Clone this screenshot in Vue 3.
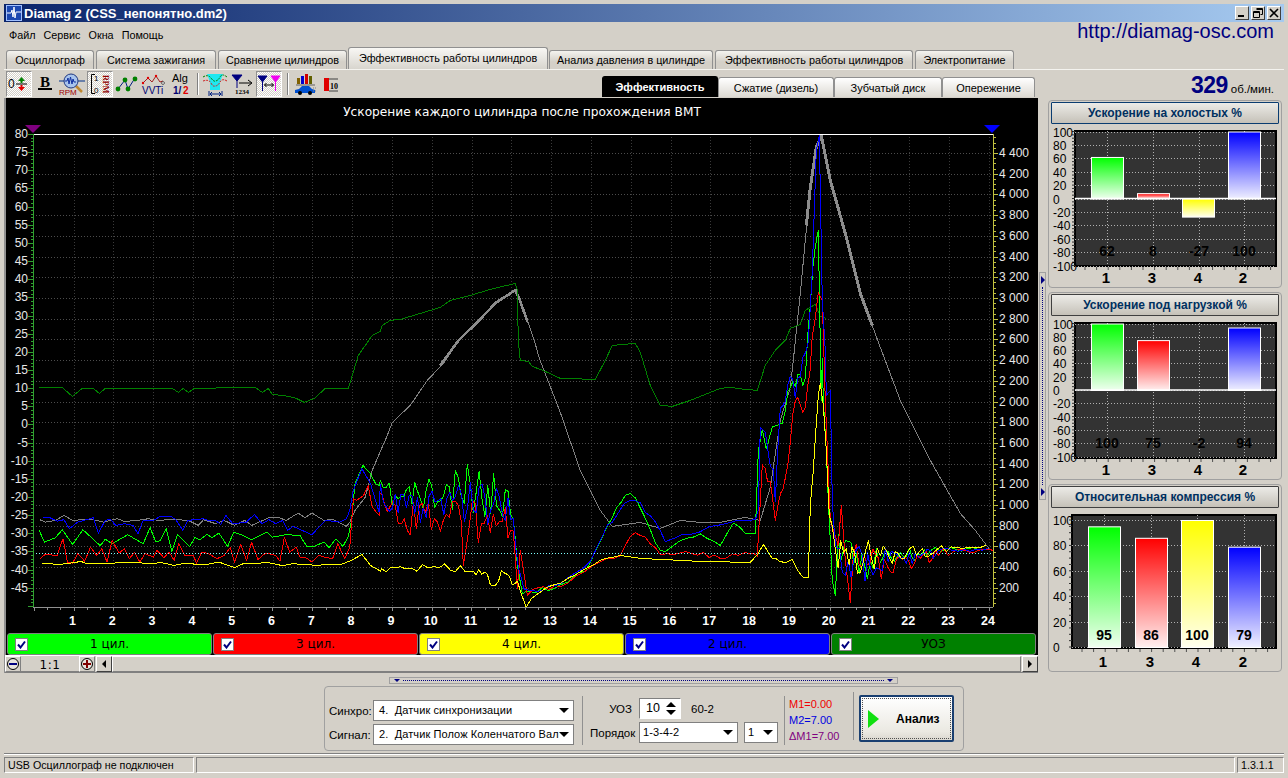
<script setup>
const tabs = [
  { t: 'Осциллограф', w: 88 },
  { t: 'Система зажигания', w: 120 },
  { t: 'Сравнение цилиндров', w: 129 },
  { t: 'Эффективность работы цилиндров', w: 200, on: true },
  { t: 'Анализ давления в цилиндре', w: 164 },
  { t: 'Эффективность работы цилиндров', w: 198 },
  { t: 'Электропитание', w: 99 }
]
const subtabs = [
  { t: 'Эффективность', w: 116, on: true },
  { t: 'Сжатие (дизель)', w: 116 },
  { t: 'Зубчатый диск', w: 108 },
  { t: 'Опережение', w: 93 }
]
const legend = [
  { t: '1 цил.', c: 'lg-green' },
  { t: '3 цил.', c: 'lg-red' },
  { t: '4 цил.', c: 'lg-yellow' },
  { t: '2 цил.', c: 'lg-blue' },
  { t: 'УОЗ', c: 'lg-dark' }
]

// main plot, page coordinates
const X0 = 33, X1 = 993, YT = 134, YB = 607
const leftY = v => 134 + (80 - v) * 3.63
const rightY = v => 153 + (4400 - v) / 200 * 20.71
const gridX = n => 73.5 + (n - 1) * 39.8

const leftLabels = []
for (let v = 80; v >= -45; v -= 5) leftLabels.push({ v, y: leftY(v) })
const leftMinor = []
for (let v = 80; v >= -50; v -= 1) leftMinor.push({ y: leftY(v), major: v % 5 === 0 })
const rightLabels = []
for (let v = 4400; v >= 200; v -= 200) {
  const s = v >= 1000 ? Math.floor(v / 1000) + ' ' + String(v % 1000).padStart(3, '0') : String(v)
  rightLabels.push({ s, y: rightY(v) })
}
const rightMinor = []
for (let v = 4600; v >= 0; v -= 50) if (rightY(v) > YT && rightY(v) < YB) rightMinor.push({ y: rightY(v), major: v % 200 === 0 })
const hours = []
for (let n = 1; n <= 24; n++) hours.push(n)
const botTicks = []
for (let x = 33.7; x < 993; x += 39.8 / 3) botTicks.push(x)

function rng(seed) {
  let s = seed
  return () => (s = (s * 16807) % 2147483647) / 2147483647
}
// points read from a 2.904 x 3 crop of the left part of the plot
const fromCrop = arr => arr.map(p => [p[0] / 2.904, 440 + p[1] / 3])
function noisy(ctrl, seed) {
  const r = rng(seed)
  const out = []
  for (let i = 0; i < ctrl.length - 1; i++) {
    const [x0, y0, a0 = 0] = ctrl[i]
    const [x1, y1, a1 = 0] = ctrl[i + 1]
    const big = Math.max(a0, a1)
    const step = big >= 8 ? 3 : big >= 3 ? 6 : 9
    const n = Math.max(1, Math.ceil((x1 - x0) / step))
    for (let j = 0; j < n; j++) {
      const t = j / n
      const a = a0 + (a1 - a0) * t
      out.push([x0 + (x1 - x0) * t, y0 + (y1 - y0) * t + (r() - 0.5) * 2 * a])
    }
  }
  return out
}
const toPts = arr => arr.map(p => p[0].toFixed(1) + ',' + p[1].toFixed(1)).join(' ')
const tail = [[845, 562, 22], [870, 560, 18], [900, 557, 12], [930, 552, 6], [950, 549, 3], [990, 548, 1]]

const green = toPts(fromCrop([[113, 270], [128, 305], [160, 292], [180, 268], [210, 312], [240, 268], [290, 316], [305, 296], [325, 310], [370, 283], [415, 310], [435, 262], [452, 305], [465, 300], [482, 265], [498, 332], [515, 283], [550, 318], [565, 292], [580, 298], [600, 282], [615, 292], [635, 278], [660, 318], [678, 275], [700, 283], [730, 298], [775, 275], [790, 290], [830, 283], [870, 285], [890, 318], [910, 318], [940, 305], [955, 322], [975, 295], [995, 318], [1010, 290], [1020, 240], [1030, 130], [1053, 75], [1075, 100], [1090, 130], [1100, 135]]).concat(noisy([[380, 485, 5], [395, 498, 15], [420, 495, 20], [440, 498, 22], [470, 490, 28], [505, 498, 20], [513, 510, 10], [517, 560, 4], [522, 590, 6], [530, 593, 3], [560, 585, 2], [585, 570, 2], [600, 540, 4], [612, 515, 3], [625, 492, 3], [635, 495, 4], [645, 520, 4], [655, 545, 3], [665, 552, 1], [680, 540, 2], [700, 535, 2], [720, 545, 1], [733, 522, 1], [745, 532, 1], [755, 533], [758, 450, 5], [762, 430, 5], [766, 445, 5], [772, 425, 5], [782, 425, 6], [785, 410, 8], [790, 380, 8], [800, 380, 8], [805, 375, 8], [810, 300, 8], [815, 240, 8], [818, 230], [821, 400], [822, 358], [823, 400], [826, 450], [828, 500], [832, 580], [835, 595], [838, 540, 18]].concat(tail), 11)))
const red = toPts(fromCrop([[115, 355], [130, 342], [165, 345], [182, 295], [195, 365], [210, 368], [225, 340], [245, 362], [262, 320], [280, 345], [295, 325], [310, 365], [325, 300], [345, 338], [360, 325], [375, 355], [390, 335], [405, 365], [420, 340], [445, 350], [455, 330], [475, 352], [490, 335], [505, 360], [518, 308], [535, 345], [560, 345], [570, 368], [585, 335], [605, 340], [630, 355], [650, 345], [668, 322], [680, 365], [698, 312], [715, 360], [730, 305], [748, 358], [770, 338], [800, 345], [812, 362], [825, 290], [840, 335], [860, 320], [870, 350], [885, 350], [905, 365], [925, 345], [940, 350], [965, 355], [980, 310], [1000, 355], [1015, 320], [1025, 175], [1035, 180], [1055, 165], [1068, 135], [1080, 200], [1100, 225]]).concat(noisy([[379, 500, 8], [395, 520, 18], [425, 515, 20], [455, 520, 25], [461, 520, 8], [463, 565, 0], [466, 525, 25], [505, 515, 22], [513, 530, 10], [517, 590, 4], [520, 552, 2], [527, 590, 5], [560, 586, 2], [600, 560, 2], [620, 556, 2], [635, 530, 4], [650, 540, 5], [660, 556, 2], [680, 552, 2], [720, 556, 3], [750, 550, 3], [757, 556], [762, 470, 6], [770, 480, 8], [775, 520, 6], [778, 505, 6], [785, 480, 8], [795, 400, 8], [805, 410, 8], [812, 340, 8], [818, 292], [822, 300], [825, 400], [830, 520], [838, 545], [841, 505], [845, 560], [850, 602]].concat(tail.map(p => [p[0] + 8, p[1] + 1, p[2]])), 23)))
const blue = toPts(fromCrop([[125, 230], [140, 230], [165, 242], [185, 238], [200, 265], [225, 245], [270, 232], [285, 278], [305, 240], [320, 236], [335, 255], [360, 250], [385, 255], [400, 280], [415, 240], [445, 240], [465, 228], [495, 228], [510, 238], [530, 270], [545, 240], [590, 235], [605, 240], [625, 240], [640, 252], [655, 225], [675, 250], [715, 245], [738, 222], [760, 250], [780, 238], [800, 250], [820, 240], [835, 270], [850, 258], [905, 283], [930, 255], [945, 240], [985, 245], [1005, 235], [1015, 210], [1025, 150], [1050, 85], [1075, 130], [1100, 215]]).concat(noisy([[380, 492, 8], [395, 505, 14], [420, 505, 18], [470, 498, 26], [505, 505, 20], [513, 520, 8], [518, 570, 4], [524, 592, 4], [560, 585, 2], [590, 562, 2], [602, 535, 4], [612, 520, 3], [630, 497, 4], [650, 515, 4], [665, 540, 2], [700, 530, 2], [735, 520, 2], [755, 520, 1], [758, 510], [760, 430, 6], [765, 428, 6], [770, 460, 6], [773, 465, 6], [775, 500, 6], [780, 400, 8], [785, 395, 8], [790, 380, 8], [795, 390, 8], [800, 370, 8], [808, 340, 8], [812, 270], [816, 150], [819, 135], [822, 300], [825, 350], [826, 395], [830, 390], [832, 500], [836, 555, 10]].concat(tail.map(p => [p[0] + 3, p[1] + 1, p[2]])), 37)))
const yellow = toPts(fromCrop([[120, 370], [135, 368], [165, 373], [205, 368], [235, 363], [250, 370], [290, 368], [330, 368], [360, 366], [420, 368], [445, 370], [465, 366], [505, 375], [530, 370], [600, 372], [635, 365], [680, 382], [705, 370], [780, 367], [820, 376], [850, 370], [920, 375], [950, 372], [990, 372], [1020, 360], [1050, 342], [1075, 375], [1105, 393]]).concat(noisy([[381, 570, 2], [400, 568, 3], [450, 567, 4], [470, 572, 6], [490, 578, 9], [512, 578, 8], [520, 592, 6], [526, 607, 2], [535, 595, 3], [560, 582, 1], [600, 560, 1], [620, 555, 0], [640, 558, 0], [700, 561, 0], [750, 562, 0], [758, 553], [763, 544], [772, 558], [780, 560, 4], [792, 565, 7], [808, 575, 7], [810, 505], [813, 470], [815, 438], [818, 395], [820, 383], [823, 405], [826, 450], [829, 515], [835, 550, 14]].concat(tail.map(p => [p[0] + 1, p[1] - 2, p[2]])), 53)))
const gray = toPts(fromCrop([[115, 238], [130, 245], [160, 240], [185, 225], [210, 240], [260, 236], [300, 245], [340, 235], [360, 243], [400, 240], [430, 235], [460, 240], [510, 236], [550, 242], [575, 255], [590, 238], [625, 250], [650, 240], [680, 255], [710, 240], [730, 255], [780, 232], [810, 232], [830, 240], [865, 218], [885, 232], [905, 218], [940, 240], [965, 237], [1005, 258], [1015, 245], [1030, 210], [1060, 170], [1080, 90], [1115, 5]]).concat([[385, 440], [392, 422], [410, 405], [427, 380], [444, 362], [458, 340], [475, 323], [496, 303], [515, 290], [520, 300], [527, 320], [534, 340], [539, 358], [560, 412], [580, 470], [600, 510], [612, 526], [640, 522], [660, 528], [680, 520], [700, 522], [720, 522], [745, 517], [760, 520], [770, 487], [780, 420], [790, 387], [793, 360], [800, 293], [810, 187], [816, 147], [821, 135], [830, 180], [845, 233], [860, 293], [880, 347], [900, 400], [930, 460], [960, 513], [975, 530], [990, 550]]))
const grayThick1 = toPts(noisy([[440, 366, 1], [458, 340, 1.500], [475, 323, 1.500], [496, 303, 1.500], [515, 290, 1], [520, 300, 1], [527, 320, 1], [534, 340]], 71))
const grayThick2 = '806,225 810,187 816,147 821,135 830,180 845,233 860,293 872,325'
const uoz = '39,387 62,387 72,396 82,388 93,388 99,393 105,388 172,388 178,392 183,388 188,392 194,388 250,387 255,387 262,392 268,388 272,394 282,395 288,396 296,398 304,402 314,398 325,388 348,388 352,375 358,355 365,345 372,335 380,331 382,325 390,320 400,319 420,313 440,307 450,300 470,295 490,289 515,283 517,290 518,340 520,360 528,361 532,366 545,371 560,378 595,379 605,360 612,345 635,343 640,352 650,385 660,405 672,406 690,400 720,388 730,387 745,389 757,390 765,365 775,350 785,340 790,328 800,324 805,310 815,304 820,316 826,318'

// bar charts on the right
const colors = { 1: '#00ff00', 3: '#ff0000', 4: '#ffff00', 2: '#0000ff' }
const order = [1, 3, 4, 2]
function makePanel(title, cfg, values, focus) {
  const { yT, yB, zero, x0, barX, gx, valY, min, svgTop } = cfg
  const scale = (zero - cfg.y100) / 100
  const ticks = []
  for (let v = 100; v >= min; v -= 20) ticks.push({ v, y: zero - v * scale })
  const minor = []
  for (let v = 100; v >= min; v -= 5) minor.push(zero - v * scale)
  const bars = order.map((c, i) => {
    const v = values[i]
    const h = Math.abs(v) * scale
    return { c, v, id: 'g' + svgTop + c, x: barX[i], y: v >= 0 ? zero - h : zero, h, gx: gx[i], color: colors[c] }
  })
  const bot = []
  for (let x = x0 + 10; x < 1274; x += 11.6) bot.push(x)
  return { title, focus, yT, yB, x0, zero, ticks, minor, bars, gx, valY, bot, svgTop, labelY: cfg.labelY, hideZero: min === 0, vb: '1049 ' + svgTop + ' 232 162' }
}
const panels = [
  makePanel('Ускорение на холостых %', { svgTop: 125, yT: 131, yB: 266, zero: 198.5, y100: 131.5, x0: 1075, min: -100, barX: [1091, 1137, 1182, 1228], gx: [1107, 1153, 1199, 1244], valY: 256, labelY: 283 }, [62, 8, -27, 100], true),
  makePanel('Ускорение под нагрузкой %', { svgTop: 317, yT: 323, yB: 458, zero: 390, y100: 323.5, x0: 1075, min: -100, barX: [1091, 1137, 1182, 1228], gx: [1107, 1153, 1199, 1244], valY: 448, labelY: 475 }, [100, 75, 0, 94], false),
  makePanel('Относительная компрессия %', { svgTop: 509, yT: 515, yB: 648, zero: 647, y100: 520, x0: 1072, min: 0, barX: [1088, 1135, 1181, 1228], gx: [1104, 1151, 1197, 1244], valY: 640, labelY: 667 }, [95, 86, 100, 79], false)
]
panels[1].bars[2].v = -2
</script>

<template>
  <div class="win">
    <div class="title">
      <svg class="app-ico" width="16" height="16" viewBox="0 0 16 16">
        <rect width="16" height="16" fill="#1c48b0" />
        <rect x="0.5" y="0.5" width="15" height="15" fill="none" stroke="#a0c0ff" />
        <path d="M1 8h4l1-3 1 7 1-10 1 11 1-6h5" fill="none" stroke="#fff" />
      </svg>
      <span class="title-text">Diamag 2 (CSS_непонятно.dm2)</span>
      <div class="caps">
        <span class="cap"><i class="min"></i></span>
        <span class="cap">
          <svg width="10" height="10" viewBox="0 0 10 10"><path d="M3.500 .5h6v6h-2M.5 3.500h6v6h-6zM3.500 1.500h6M.5 4.500h6" fill="none" stroke="#000" /></svg>
        </span>
        <span class="cap">
          <svg width="10" height="10" viewBox="0 0 10 10"><path d="M1 1l8 8M9 1l-8 8" stroke="#000" stroke-width="1.600" /></svg>
        </span>
      </div>
    </div>

    <div class="menu">
      <span>Файл</span><span>Сервис</span><span>Окна</span><span>Помощь</span>
      <a class="url">http://diamag-osc.com</a>
    </div>

    <div class="tabs">
      <div v-for="t in tabs" :key="t.w + t.t" class="tab" :class="{ on: t.on }" :style="{ width: t.w + 'px' }">{{ t.t }}</div>
    </div>

    <div class="toolbar">
      <div class="tb w26 pressed">
        <svg width="24" height="22" viewBox="0 0 24 22">
          <text x="1" y="15" class="ic" font-size="12" fill="#000">0</text>
          <path d="M9 11h11" stroke="#000" />
          <path d="M14.500 4l-3.500 4h2.500v2h2v-2h2.500z" fill="#008000" />
          <path d="M14.500 18l-3.500-4h2.500v-2h2v2h2.500z" fill="#e00000" />
        </svg>
      </div>
      <div class="tb w25">
        <svg width="20" height="22" viewBox="0 0 20 22">
          <text x="10" y="14" text-anchor="middle" class="ic-b" font-size="15" fill="#000">B</text>
          <rect x="3" y="15" width="14" height="2" fill="#000" />
        </svg>
      </div>
      <div class="tb w30">
        <svg width="28" height="24" viewBox="0 0 28 24">
          <path d="M1 9h6M20 9h7" stroke="#00308a" />
          <path d="M18 14l6 6" stroke="#c08830" stroke-width="2.500" />
          <circle cx="13" cy="9" r="7" fill="#a8c4ec" stroke="#203880" />
          <path d="M7 9h2l1-3 1 6 1.500-7 1.500 7 1-5 1 3h2" fill="none" stroke="#1030a0" />
          <text x="1" y="23" class="ic" font-size="8" fill="#a00000">RPM</text>
        </svg>
      </div>
      <div class="tb w26 pressed">
        <svg width="24" height="24" viewBox="0 0 24 24">
          <path d="M7 2.500H3.500v19H7" fill="none" stroke="#000" />
          <text x="6" y="9" class="ic" font-size="8">1</text>
          <text x="6" y="21" class="ic" font-size="8">0</text>
          <text transform="translate(15 3) rotate(90)" class="ic-b" font-size="8" fill="#900000">RPM</text>
        </svg>
      </div>
      <div class="tb w26">
        <svg width="24" height="22" viewBox="0 0 24 22">
          <path d="M4 16L11 7l3 9L21 5" fill="none" stroke="#002080" />
          <circle cx="4" cy="16" r="2.400" fill="#008000" /><circle cx="11" cy="7" r="2.400" fill="#008000" />
          <circle cx="14" cy="16" r="2.400" fill="#008000" /><circle cx="21" cy="6" r="2.400" fill="#008000" />
        </svg>
      </div>
      <div class="tb w28">
        <svg width="24" height="24" viewBox="0 0 24 24">
          <path d="M2 11l5-5 4 4 4-6 4 6 3-1" fill="none" stroke="#a02020" />
          <circle cx="7" cy="6" r="1.200" fill="#e00000" /><circle cx="2" cy="11" r="1.200" fill="#e00000" />
          <circle cx="15" cy="4" r="1.200" fill="#e00000" /><circle cx="22" cy="11" r="1.400" fill="#fff" stroke="#000" stroke-width=".6" />
          <text x="1" y="22" class="ic" font-size="10" fill="#000070">VVTi</text>
        </svg>
      </div>
      <div class="tb w27">
        <svg width="24" height="26" viewBox="0 0 24 26">
          <text x="3" y="11" class="ic" font-size="11" fill="#000">Alg</text>
          <text x="4" y="23" class="ic-s" font-size="10" fill="#000070">1/</text>
          <text x="14" y="23" class="ic-s" font-size="10" fill="#e00000">2</text>
        </svg>
      </div>
      <div class="tb-sep w7"></div>
      <div class="tb w28">
        <svg width="26" height="24" viewBox="0 0 26 24">
          <path d="M5 2h16l-3 8v8H8v-8z" fill="#20e8f0" />
          <path d="M1 5q5-3 8 1t4 3q3 0 5-4t7 0" fill="none" stroke="#008000" stroke-dasharray="2 1" />
          <path d="M1 9q6-2 8 2t4 3q3 0 5-4t7-1" fill="none" stroke="#d02020" stroke-dasharray="2 1" />
          <path d="M8 22h11M8 22l2-2M8 22l2 2M19 22l-2-2M19 22l-2 2M7 19v5M20 19v5" stroke="#002080" fill="none" />
        </svg>
      </div>
      <div class="tb w27">
        <svg width="24" height="24" viewBox="0 0 24 24">
          <path d="M1 3h10L6 9zM6 9v7" fill="#000080" stroke="#000080" />
          <path d="M8 11h12M17 8l4 3-4 3" fill="none" stroke="#000" />
          <text x="4" y="22" class="ic-b" font-size="7" fill="#000">1234</text>
        </svg>
      </div>
      <div class="tb w26 pressed">
        <svg width="24" height="22" viewBox="0 0 24 22">
          <path d="M1 3h9L5.500 9zM5.500 9v9" fill="#000080" stroke="#000080" />
          <path d="M14 3h9l-4.500 6zM18.500 9v9" fill="#f000f0" stroke="#f000f0" />
          <path d="M7.500 12h9M7.500 12l2-2M7.500 12l2 2M16.500 12l-2-2M16.500 12l-2 2" fill="none" stroke="#000" />
        </svg>
      </div>
      <div class="tb-sep w10"></div>
      <div class="tb w27">
        <svg width="24" height="24" viewBox="0 0 24 24">
          <rect x="3" y="6" width="3" height="6" fill="#806000" /><rect x="7" y="4" width="3" height="8" fill="#0000d0" />
          <rect x="11" y="2" width="3" height="10" fill="#d00000" /><rect x="15" y="4" width="3" height="8" fill="#606000" />
          <path d="M2 13h19" stroke="#606060" />
          <path d="M1 21v-3l4-1 3-3h7l3 3 3 1v3z" fill="#0050d0" />
          <circle cx="6" cy="21" r="2" fill="#000" /><circle cx="16" cy="21" r="2" fill="#000" />
          <path d="M19 19h4M19 16h3" stroke="#808080" stroke-dasharray="1 1" />
        </svg>
      </div>
      <div class="tb w24">
        <svg width="18" height="22" viewBox="0 0 18 22">
          <rect x="2" y="5" width="5" height="13" fill="#e00000" />
          <path d="M7 6h9M7 18h9" stroke="#404040" />
          <text x="8" y="16" class="ic-b" font-size="8" fill="#000">10</text>
        </svg>
      </div>
      <div class="subtabs">
        <div v-for="s in subtabs" :key="s.t" class="subtab" :class="{ on: s.on }" :style="{ width: s.w + 'px' }">{{ s.t }}</div>
      </div>
      <div class="rpm"><b>329</b><span>об./мин.</span></div>
    </div>

    <div class="main">
      <div class="scope">
        <svg class="plot" width="1032" height="535" viewBox="6 98 1032 535">
          <text x="522" y="116" text-anchor="middle" class="plot-title">Ускорение каждого цилиндра после прохождения ВМТ</text>

          <line v-for="n in hours" :key="'v' + n" :x1="Math.round(gridX(n)) + 0.5" :x2="Math.round(gridX(n)) + 0.5" :y1="YT" :y2="YB" class="grid-v" />
          <line v-for="r in rightLabels" :key="'h' + r.s" :x1="X0" :x2="X1" :y1="Math.round(r.y) + 0.5" :y2="Math.round(r.y) + 0.5" class="grid-h" />

          <g transform="translate(0.3 0.4)">
            <polyline :points="gray" class="tr" stroke="#808080" />
            <polyline :points="grayThick1" class="tr" stroke="#8c8c8c" stroke-width="2.600" />
            <polyline :points="grayThick2" class="tr" stroke="#8c8c8c" stroke-width="3" />
            <polyline :points="uoz" class="tr" stroke="#008000" />
            <polyline :points="green" class="tr" stroke="#00ff00" />
            <polyline :points="red" class="tr" stroke="#ff0000" />
            <polyline :points="blue" class="tr" stroke="#0000ff" />
            <polyline :points="yellow" class="tr" stroke="#ffff00" />
          </g>
          <line :x1="X0" :x2="X1" y1="553.5" y2="553.5" stroke="#80ffff" stroke-dasharray="1 2" />

          <line :x1="X0 - 1" :x2="X1" :y1="YT + 0.5" :y2="YT + 0.5" stroke="#fff" />
          <line :x1="X0 + 0.5" :x2="X0 + 0.5" :y1="YT" :y2="YB" stroke="#30a030" />
          <line :x1="X1 + 0.5" :x2="X1 + 0.5" :y1="YT" :y2="YB" stroke="#c0c040" />
          <line :x1="X0" :x2="X1" :y1="YB + 0.5" :y2="YB + 0.5" stroke="#909090" />

          <line v-for="(t, i) in leftMinor" :key="'lm' + i" :x1="t.major ? 28 : 31" :x2="33" :y1="Math.round(t.y) + 0.5" :y2="Math.round(t.y) + 0.5" stroke="#30a030" />
          <line v-for="(t, i) in rightMinor" :key="'rm' + i" :x1="994" :x2="t.major ? 998 : 996" :y1="Math.round(t.y) + 0.5" :y2="Math.round(t.y) + 0.5" stroke="#c0c040" />
          <line v-for="(x, i) in botTicks" :key="'bt' + i" :x1="Math.round(x) + 0.5" :x2="Math.round(x) + 0.5" :y1="YB" :y2="i % 3 === 0 ? YB + 4 : YB + 3" stroke="#909090" />

          <text v-for="l in leftLabels" :key="'ll' + l.v" x="28" :y="l.y + 4" text-anchor="end" class="ax">{{ l.v }}</text>
          <text v-for="r in rightLabels" :key="'rl' + r.s" x="999" :y="r.y + 4" class="ax">{{ r.s }}</text>
          <text v-for="n in hours" :key="'xl' + n" :x="gridX(n) - 1" y="625" text-anchor="middle" class="ax-b">{{ n }}</text>

          <path d="M25 125h16l-8 8z" fill="#800080" />
          <path d="M984 125h16l-8 8z" fill="#0000ff" />
        </svg>

        <div class="legend">
          <div v-for="l in legend" :key="l.t" class="lg" :class="l.c">
            <span class="chk">
              <svg width="9" height="9" viewBox="0 0 9 9"><path d="M1 4.500l2.500 3L8 1.500" fill="none" stroke="#000080" stroke-width="2" /></svg>
            </span>
            <span class="lg-t">{{ l.t }}</span>
          </div>
        </div>

        <div class="scale">
          <span class="zbtn"><i class="zoom-ico minus"></i></span>
          <span class="ratio">1:1</span>
          <span class="zbtn"><i class="zoom-ico plus"></i></span>
          <span class="sbtn"><i class="arr-l"></i></span>
          <span class="strack"></span>
          <span class="sbtn"><i class="arr-r"></i></span>
        </div>
      </div>

      <div class="vsplit">
        <i class="arr-r small"></i>
        <span class="vdots"></span>
        <i class="arr-r small"></i>
      </div>

      <div class="side">
        <div v-for="p in panels" :key="p.title" class="panel">
          <div class="phead" :class="{ focus: p.focus }">{{ p.title }}</div>
          <svg width="232" height="162" :viewBox="p.vb">
            <defs>
              <linearGradient v-for="b in p.bars" :id="b.id" :key="b.id" x1="0" y1="0" x2="0" y2="1">
                <stop offset="0" :stop-color="b.color" />
                <stop offset="1" :stop-color="b.color" stop-opacity="0.06" />
              </linearGradient>
            </defs>
            <rect :x="p.x0" :y="p.yT" :width="1276 - p.x0" :height="p.yB - p.yT" fill="#333" stroke="#000" stroke-width="2" />
            <line v-for="t in p.ticks" :key="'g' + t.v" :x1="p.x0" x2="1276" :y1="Math.round(t.y) + 0.5" :y2="Math.round(t.y) + 0.5" class="bgrid" />
            <line v-for="g in p.gx" :key="'gx' + g" :x1="g + 0.5" :x2="g + 0.5" :y1="p.yT" :y2="p.yB" class="bgrid" />
            <g v-for="b in p.bars" :key="'b' + b.c">
              <template v-if="b.h > 0 && !(p.title.includes('нагрузкой') && b.c === 4)">
                <rect :x="b.x + 0.5" :y="b.y + 0.5" width="32" :height="b.h" fill="#fff" />
                <rect :x="b.x + 0.5" :y="b.y + 0.5" width="32" :height="b.h" :fill="'url(#' + b.id + ')'" stroke="#fff" />
              </template>
            </g>
            <line v-if="!p.hideZero" :x1="p.x0" x2="1276" :y1="p.zero" :y2="p.zero" stroke="#fff" stroke-width="1.500" />
            <line v-for="(m, i) in p.minor" :key="'m' + i" :x1="p.x0 - 3" :x2="p.x0" :y1="m" :y2="m" stroke="#303030" />
            <line v-for="(x, i) in p.bot" :key="'bt' + i" :x1="x" :x2="x" :y1="p.yB + 1" :y2="p.yB + 4" stroke="#505050" />
            <text v-for="t in p.ticks" :key="'t' + t.v" x="1053" :y="t.y + 5" class="bax">{{ t.v }}</text>
            <text v-for="b in p.bars" :key="'v' + b.c" :x="b.gx" :y="p.valY" text-anchor="middle" class="bval">{{ b.v }}</text>
            <text v-for="b in p.bars" :key="'l' + b.c" :x="b.gx - 1" :y="p.labelY" text-anchor="middle" class="blab">{{ b.c }}</text>
          </svg>
        </div>
      </div>
    </div>

    <div class="bottom">
      <div class="hsplit">
        <i class="arr-d"></i><span class="hdots"></span><i class="arr-d"></i>
      </div>
      <div class="box">
        <div class="col1">
          <div class="row"><label class="lbl">Синхро:</label>
            <div class="combo c1">4.&nbsp; Датчик синхронизации<i class="arr-d big"></i></div>
          </div>
          <div class="row"><label class="lbl">Сигнал:</label>
            <div class="combo c1">2.&nbsp; Датчик Полож Коленчатого Вал<i class="arr-d big"></i></div>
          </div>
        </div>
        <span class="vsep s1"></span>
        <div class="col2">
          <div class="row r1">
            <label class="lbl2 uoz">УОЗ</label>
            <div class="spin">10
              <span class="spin-arrows"><i class="arr-u big"></i><i class="arr-d big"></i></span>
            </div>
            <span class="teeth">60-2</span>
          </div>
          <div class="row r2">
            <label class="lbl2">Порядок</label>
            <div class="combo c2">1-3-4-2<i class="arr-d big"></i></div>
            <div class="combo c3">1<i class="arr-d big"></i></div>
          </div>
        </div>
        <span class="vsep s2"></span>
        <div class="col3">
          <span class="m-red">M1=0.00</span>
          <span class="m-blue">M2=7.00</span>
          <span class="m-purple">ΔM1=7.00</span>
        </div>
        <span class="vsep s3"></span>
        <div class="go">
          <i class="go-tri"></i>
          <b>Анализ</b>
        </div>
      </div>
    </div>

    <div class="status">
      <div class="st s-a">USB Осциллограф не подключен</div>
      <div class="st s-b"></div>
      <div class="st s-c">1.3.1.1</div>
    </div>
  </div>
</template>

<style scoped>
.win {
  width: 1288px;
  height: 778px;
  box-sizing: border-box;
  padding: 4px 4px 0;
  overflow: hidden;
  background: #d4d0c8;
  font-family: "Liberation Sans", Arial, sans-serif;
  font-size: 11px;
  color: #000;
}

.title {
  height: 18px;
  display: flex;
  align-items: center;
  padding-left: 2px;
  background: linear-gradient(90deg, #0a246a, #a6caf0);
}
.app-ico { margin-right: 2px; }
.title-text {
  color: #fff;
  font-weight: bold;
  font-size: 13px;
  font-family: "Liberation Sans", sans-serif;
}
.caps { margin-left: auto; margin-right: 3px; display: flex; gap: 2px; }
.cap {
  width: 14px;
  height: 14px;
  box-sizing: border-box;
  background: #d4d0c8;
  border: 1px solid;
  border-color: #fff #404040 #404040 #fff;
  display: flex;
  align-items: center;
  justify-content: center;
}
.min { width: 6px; height: 2px; background: #000; margin-top: 6px; margin-right: 2px; }

.menu {
  height: 22px;
  display: flex;
  align-items: center;
  gap: 8px;
  padding-left: 5px;
  font-size: 10.800px;
  padding-top: 4px;
  box-sizing: border-box;
}
.url {
  margin-left: auto;
  margin-right: 10px;
  margin-top: -8px;
  color: #000080;
  font-size: 20px;
}

.tabs {
  height: 25px;
  box-sizing: border-box;
  display: flex;
  align-items: flex-end;
  gap: 2px;
  padding-left: 2px;
}
.tab {
  height: 19px;
  box-sizing: border-box;
  background: linear-gradient(#f4f3ef, #d4d0c8 60%);
  border: 1px solid #909090;
  border-bottom: none;
  border-radius: 3px 3px 0 0;
  text-align: center;
  line-height: 18px;
  font-size: 10.800px;
  white-space: nowrap;
  overflow: hidden;
}
.tab.on {
  height: 22px;
  margin-left: -1px;
  margin-right: -1px;
  line-height: 20px;
  z-index: 1;
  background: linear-gradient(#f8f7f4, #d8d5ce);
}

.toolbar {
  height: 28px;
  box-sizing: border-box;
  display: flex;
  align-items: flex-start;
  padding: 1px 0 0 2px;
  border-top: 1px solid #f4f3ef;
}
.tb {
  height: 26px;
  box-sizing: border-box;
  display: flex;
  align-items: center;
  justify-content: center;
  flex: none;
}
.w24 { width: 24px; }
.w25 { width: 25px; }
.w26 { width: 26px; }
.w27 { width: 27px; }
.w28 { width: 28px; }
.w30 { width: 30px; }
.pressed {
  border: 1px solid;
  border-color: #909090 #fff #fff #909090;
  background: repeating-conic-gradient(#fff 0 25%, #d4d0c8 0 50%) 0 0 / 2px 2px;
}
.tb-sep { height: 24px; flex: none; position: relative; }
.w7 { width: 7px; border-left: 0; }
.w10 { width: 10px; }
.tb-sep::after {
  content: "";
  display: block;
  width: 1px;
  height: 22px;
  margin: 2px auto 0;
  background: #808080;
  box-shadow: 1px 0 #fff;
}
.ic { font-family: "Liberation Sans", sans-serif; }
.ic-s { font-family: "Liberation Sans", sans-serif; font-weight: bold; }
.ic-b { font-family: "Liberation Serif", serif; font-weight: bold; }

.subtabs {
  position: absolute;
  left: 602px;
  top: 76px;
  display: flex;
}
.subtab {
  height: 20px;
  margin-top: 1px;
  box-sizing: border-box;
  border: 1px solid #909090;
  border-bottom: none;
  border-radius: 3px 3px 0 0;
  background: linear-gradient(#fff, #dcd9d2);
  text-align: center;
  line-height: 20px;
  font-size: 11px;
}
.subtab.on {
  height: 21px;
  margin-top: 0;
  background: #000;
  color: #fff;
  font-weight: bold;
  border-color: #000;
}
.rpm {
  margin-left: auto;
  margin-right: 10px;
  margin-top: 1px;
  display: flex;
  align-items: baseline;
  gap: 3px;
}
.rpm b { color: #000080; font-size: 23px; letter-spacing: -0.500px; }
.rpm span { font-size: 11.500px; }

.main { display: flex; margin-top: 1px; height: 577px; }
.scope { width: 1034px; border-left: 2px solid #909090; box-sizing: border-box; background: #000; height: 575px; }
.plot { display: block; background: #000; }
.plot-title { fill: #fff; font: 12.200px "DejaVu Sans", sans-serif; }
.grid-v { stroke: #3a3a3a; stroke-dasharray: 1 2; }
.grid-h { stroke: #4c4c4c; stroke-dasharray: 1 2; }
.tr { fill: none; stroke-linejoin: round; shape-rendering: crispEdges; }
.ax { fill: #e8e8e8; font: 12px "Liberation Sans", sans-serif; }
.ax-b { fill: #fff; font: bold 12.500px "Liberation Sans", sans-serif; }

.legend {
  height: 22px;
  display: flex;
  gap: 1px;
  padding-left: 1px;
  background: #000;
}
.lg {
  width: 205px;
  box-sizing: border-box;
  border: 1px solid #808080;
  border-radius: 3px;
  display: flex;
  align-items: center;
  position: relative;
}
.lg-green { background: #00ff00; }
.lg-red { background: #ff0000; }
.lg-yellow { background: #ffff00; }
.lg-blue { background: #0000ff; }
.lg-dark { background: #008000; }
.chk {
  width: 13px;
  height: 13px;
  box-sizing: border-box;
  margin-left: 7px;
  border: 1px solid #808080;
  background: #fff;
  display: flex;
  align-items: center;
  justify-content: center;
  flex: none;
}
.lg-t {
  flex: 1;
  margin-right: 20px;
  text-align: center;
  font: 12px "DejaVu Sans", sans-serif;
}

.scale {
  height: 18px;
  box-sizing: border-box;
  background: #d4d0c8;
  border-top: 1px solid #fff;
  border-bottom: 1px solid #808080;
  display: flex;
  align-items: stretch;
  margin-left: -1px;
}
.zbtn {
  width: 16px;
  flex: none;
  box-sizing: border-box;
  border: 1px solid;
  border-color: #fff #808080 #808080 #fff;
  display: flex;
  align-items: center;
  justify-content: center;
}
.zoom-ico {
  width: 12px;
  height: 12px;
  box-sizing: border-box;
  border: 1px solid #000;
  border-radius: 50%;
  background: #e8e4dc;
  position: relative;
}
.zoom-ico::before {
  content: "";
  position: absolute;
  left: 1px;
  top: 4px;
  width: 8px;
  height: 2px;
  background: #000080;
}
.plus::before { background: #800000; }
.plus::after {
  content: "";
  position: absolute;
  left: 4px;
  top: 1px;
  width: 2px;
  height: 8px;
  background: #800000;
}
.ratio {
  width: 58px;
  flex: none;
  text-align: center;
  font: 12px/18px "DejaVu Sans", sans-serif;
  letter-spacing: 0.500px;
  border-bottom: 1px solid #808080;
}
.sbtn {
  width: 16px;
  flex: none;
  box-sizing: border-box;
  margin-left: 1px;
  border: 1px solid;
  border-color: #fff #404040 #404040 #fff;
  display: flex;
  align-items: center;
  justify-content: center;
}
.strack {
  flex: 1;
  box-sizing: border-box;
  border: 1px solid;
  border-color: #fff #808080 #808080 #fff;
}

.arr-l, .arr-r, .arr-d, .arr-u { display: block; width: 0; height: 0; flex: none; }
.arr-l { border: 4px solid transparent; border-left: 0; border-right: 4px solid #000; }
.arr-r { border: 4px solid transparent; border-right: 0; border-left: 4px solid #000; }
.arr-r.small { border-width: 4px 0 4px 4px; border-left-color: #000080; }
.arr-d { border: 3px solid transparent; border-bottom: 0; border-top: 3px solid #000080; }
.arr-d.big { border-width: 5px 5px 0; border-top-color: #000; }
.arr-u.big { border: 5px solid transparent; border-top: 0; border-bottom: 5px solid #000; }

.vsplit {
  width: 7px;
  height: 228px;
  margin: 174px 0 0 1px;
  box-sizing: border-box;
  border: 1px solid #a0a0a0;
  flex: none;
  display: flex;
  flex-direction: column;
  align-items: center;
  padding: 3px 0;
}
.vdots { flex: 1; border-left: 1px dotted #000080; margin: 3px 0; }

.side { margin-left: 2px; padding-top: 2px; width: 234px; display: flex; flex-direction: column; gap: 4px; }
.panel {
  height: 188px;
  box-sizing: border-box;
  border: 1px solid #a0a0a0;
  border-radius: 4px;
  padding: 1px 2px 0;
}
.panel svg { display: block; margin: 1px 0 0 -2px; }
.phead {
  height: 22px;
  box-sizing: border-box;
  border: 1px solid #404040;
  border-radius: 1px;
  background: linear-gradient(#ecebe7, #c5c1b8);
  color: #003060;
  text-align: center;
  font-weight: bold;
  font-size: 12px;
  line-height: 20px;
}
.phead.focus { border-color: #0a3c70; }
.bgrid { stroke: #b0b0b0; stroke-dasharray: 1 2; }
.bax { font: 12px "Liberation Sans", sans-serif; fill: #000; }
.bval { font: bold 14px "Liberation Sans", sans-serif; fill: #000; }
.blab { font: bold 15px "Liberation Sans", sans-serif; fill: #000; }

.bottom {
  height: 79px;
  padding-top: 2px;
  box-sizing: border-box;
  border-bottom: 1px solid #808080;
  display: flex;
  flex-direction: column;
}
.hsplit {
  width: 509px;
  height: 7px;
  margin-left: 385px;
  box-sizing: border-box;
  border: 1px solid #a0a0a0;
  display: flex;
  align-items: center;
  justify-content: space-between;
  padding: 0 4px;
}
.hdots { flex: 1; border-top: 1px dotted #000080; margin: 0 3px; }
.box {
  width: 640px;
  height: 65px;
  margin: 2px 0 0 320px;
  box-sizing: border-box;
  border: 1px solid #a0a0a0;
  border-radius: 4px;
  display: flex;
  align-items: flex-start;
  position: relative;
}
.row { display: flex; align-items: center; }
.col1 { margin: 13px 0 0 4px; display: flex; flex-direction: column; gap: 3px; }
.lbl { width: 44px; font-size: 11.500px; }
.combo {
  box-sizing: border-box;
  height: 21px;
  border: 1px solid #808080;
  background: #fff;
  font-size: 11px;
  letter-spacing: 0.100px;
  line-height: 19px;
  padding-left: 5px;
  position: relative;
  white-space: nowrap;
  overflow: hidden;
}
.combo .arr-d {
  position: absolute;
  right: 4px;
  top: 7px;
}
.c1 { width: 201px; }
.c2 { width: 99px; padding-left: 3px; }
.c3 { width: 34px; margin-left: 6px; padding-left: 3px; }
.vsep { width: 1px; background: #909090; flex: none; }
.s1 { height: 49px; margin: 9px 0 0 8px; }
.col2 { margin: 11px 0 0 7px; display: flex; flex-direction: column; }
.r1 { height: 21px; }
.r2 { margin-top: 3px; }
.lbl2 { width: 49px; font-size: 11.500px; }
.uoz { text-align: right; padding-right: 7px; box-sizing: border-box; }
.spin {
  width: 42px;
  height: 21px;
  box-sizing: border-box;
  background: #fff;
  border: 1px solid #808080;
  border-right-color: #fff;
  border-bottom-color: #fff;
  font-size: 12.500px;
  line-height: 19px;
  padding-left: 6px;
  position: relative;
}
.spin-arrows {
  position: absolute;
  right: 4px;
  top: 3px;
  display: flex;
  flex-direction: column;
  gap: 3px;
}
.teeth { margin-left: 10px; font-size: 11.500px; }
.s2 { height: 49px; margin: 9px 0 0 6px; }
.col3 { margin: 9px 0 0 4px; width: 63px; display: flex; flex-direction: column; font-size: 11px; line-height: 16px; }
.m-red { color: #f00000; }
.m-blue { color: #0000e0; }
.m-purple { color: #800080; }
.s3 { height: 48px; margin: 5px 0 0 1px; }
.go {
  width: 95px;
  height: 47px;
  margin: 8px 0 0 5px;
  box-sizing: border-box;
  border: 2px solid #1a3f70;
  border-radius: 2px;
  outline: 1px dotted #505050;
  outline-offset: -4px;
  background: linear-gradient(#fff, #ebe9e2 80%, #dbd8d0);
  display: flex;
  align-items: center;
  font-size: 12px;
}
.go-tri {
  width: 0;
  height: 0;
  margin-left: 7px;
  border-style: solid;
  border-width: 9px 0 9px 11px;
  border-color: transparent transparent transparent #10e010;
}
.go b { margin-left: 17px; }

.status {
  height: 21px;
  border-top: 1px solid #fff;
  padding-top: 2px;
  box-sizing: border-box;
  display: flex;
  gap: 2px;
}
.st {
  height: 16px;
  box-sizing: border-box;
  border: 1px solid;
  border-color: #808080 #fff #fff #808080;
  line-height: 14px;
  padding-left: 3px;
  font-size: 10.700px;
}
.s-a { width: 190px; }
.s-b { width: 1039px; }
.s-c { flex: 1; }
</style>

<style>
html, body { background: #d4d0c8; overflow: hidden; }
</style>
